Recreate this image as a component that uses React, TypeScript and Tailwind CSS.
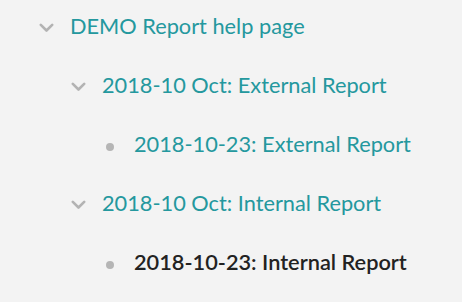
import React from "react";

type Node = { label: string; level: 0 | 1 | 2; kind: "chevron" | "bullet"; active?: boolean };

const rows: Node[] = [
  { label: "DEMO Report help page", level: 0, kind: "chevron" },
  { label: "2018-10 Oct: External Report", level: 1, kind: "chevron" },
  { label: "2018-10-23: External Report", level: 2, kind: "bullet" },
  { label: "2018-10 Oct: Internal Report", level: 1, kind: "chevron" },
  { label: "2018-10-23: Internal Report", level: 2, kind: "bullet", active: true },
];

const indent = ["pl-[38px]", "pl-[70px]", "pl-[102px]"];

function Chevron() {
  return (
    <svg width="15" height="10" viewBox="0 0 15 10" className="mt-[2px]" aria-hidden>
      <polyline
        points="1.8,1.8 7.5,7.5 13.2,1.8"
        fill="none"
        stroke="#b3b3b3"
        strokeWidth="2.6"
        strokeLinecap="round"
        strokeLinejoin="round"
      />
    </svg>
  );
}

function Bullet() {
  return <span className="mt-[5px] block h-[8px] w-[8px] rounded-full bg-[#b5b5b5]" />;
}

export default function App() {
  return (
    <div className="h-[302px] w-full overflow-hidden bg-[#f3f3f3] font-['Lato',sans-serif]">
      <ul className="mt-[-3px]">
        {rows.map((r) => (
          <li key={r.label} className={`flex h-[59px] items-center ${indent[r.level]}`}>
            <span className="flex w-[32px] shrink-0">
              <span className="flex w-[16px] justify-center">
                {r.kind === "chevron" ? <Chevron /> : <Bullet />}
              </span>
            </span>
            <span
              className={
                r.active
                  ? "whitespace-nowrap text-[21.75px] font-semibold text-[#222222]"
                  : "whitespace-nowrap text-[21.75px] text-[#24989e]"
              }
            >
              {r.label}
            </span>
          </li>
        ))}
      </ul>
    </div>
  );
}
